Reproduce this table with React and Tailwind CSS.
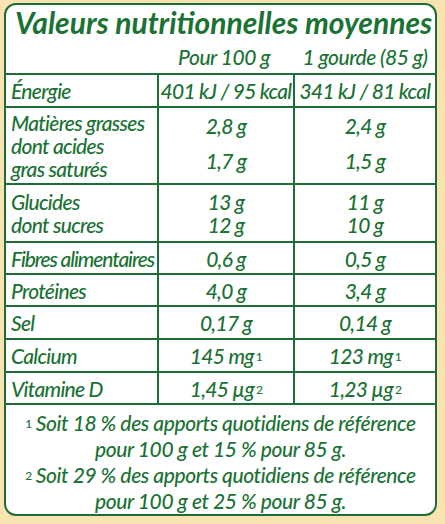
const rows = [
  { label: ['Énergie'], a: ['401 kJ / 95 kcal'], b: ['341 kJ / 81 kcal'], h: 'h-[33px]' },
  { label: ['Matières grasses', 'dont acides', 'gras saturés'], a: ['2,8 g', '1,7 g'], b: ['2,4 g', '1,5 g'], h: 'h-[77px]', fat: true },
  { label: ['Glucides', 'dont sucres'], a: ['13 g', '12 g'], b: ['11 g', '10 g'], h: 'h-[58px]' },
  { label: ['Fibres alimentaires'], a: ['0,6 g'], b: ['0,5 g'], h: 'h-[32px]', tight: true },
  { label: ['Protéines'], a: ['4,0 g'], b: ['3,4 g'], h: 'h-[32px]' },
  { label: ['Sel'], a: ['0,17 g'], b: ['0,14 g'], h: 'h-[33px]' },
  { label: ['Calcium'], a: ['145 mg', '1'], b: ['123 mg', '1'], h: 'h-[33px]', sup: true },
  { label: ['Vitamine D'], a: ['1,45 µg', '2'], b: ['1,23 µg', '2'], h: 'h-[32px]', sup: true },
]

function Value({ vals, row }) {
  if (row.sup) {
    return (
      <span>
        {vals[0]}
        <sup className="text-[12px] ml-[2px] relative -top-[3px] not-italic">{vals[1]}</sup>
      </span>
    )
  }
  if (row.fat) {
    return (
      <div className="flex flex-col items-center h-full pt-[7px] leading-[22px]">
        <span>{vals[0]}</span>
        <span className="mt-[13px]">{vals[1]}</span>
      </div>
    )
  }
  return (
    <div className="flex flex-col items-center leading-[23px]">
      {vals.map((v) => <span key={v}>{v}</span>)}
    </div>
  )
}

export default function App() {
  return (
    <div className="w-[445px] h-[524px] bg-[#f9e3b2] pl-[4px] pt-[3px]" style={{ fontFamily: 'Lato, "Liberation Sans", sans-serif' }}>
      <div className="w-[433px] h-[513px] bg-white border-2 border-[#1c6e36] rounded-[12px] overflow-hidden text-[#1a7234] italic whitespace-nowrap">
        <h1 className="h-[33px] pl-[9px] pt-[2px] text-[30px] leading-[30px] font-bold">
          Valeurs nutritionnelles moyennes
        </h1>
        <div className="h-[35px] grid grid-cols-[153px_136px_1fr] items-center text-[21px] font-medium tracking-[-0.5px] pt-[2px]">
          <span />
          <span className="text-center pr-[6px]">Pour 100 g</span>
          <span className="text-center">1 gourde (85 g)</span>
        </div>
        <div className="border-t-2 border-[#1c6e36] text-[21px] font-medium tracking-[-0.7px]">
          {rows.map((row) => (
            <div key={row.label[0]} className={`grid grid-cols-[153px_136px_1fr] border-b-2 border-[#1c6e36] ${row.h}`}>
              <div className={`border-r-2 border-[#1c6e36] pl-[5px] flex flex-col justify-center leading-[23px] ${row.tight ? 'tracking-[-1.1px]' : ''}`}>
                {row.label.map((l) => <span key={l}>{l}</span>)}
              </div>
              <div className={`border-r-2 border-[#1c6e36] flex justify-center ${row.fat ? 'items-start' : 'items-center'}`}>
                <Value vals={row.a} row={row} />
              </div>
              <div className={`flex justify-center ${row.fat ? 'items-start' : 'items-center'}`}>
                <Value vals={row.b} row={row} />
              </div>
            </div>
          ))}
        </div>
        <div className="pt-[5px] text-center text-[21px] font-medium leading-[26px] tracking-[-0.4px]">
          <p><sup className="text-[12px] mr-[4px] relative -top-[3px] not-italic">1</sup>Soit 18 % des apports quotidiens de référence</p>
          <p>pour 100 g et 15 % pour 85 g.</p>
          <p><sup className="text-[12px] mr-[4px] relative -top-[3px] not-italic">2</sup>Soit 29 % des apports quotidiens de référence</p>
          <p>pour 100 g et 25 % pour 85 g.</p>
        </div>
      </div>
    </div>
  )
}
